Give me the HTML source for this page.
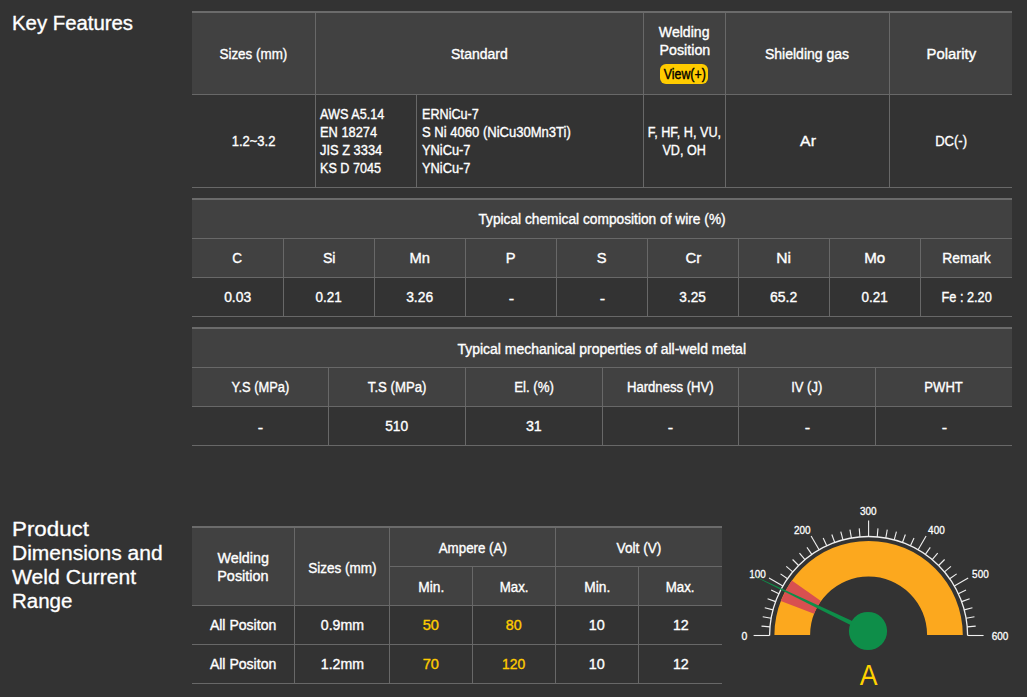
<!DOCTYPE html>
<html><head><meta charset="utf-8"><title>Key Features</title>
<style>
html,body{margin:0;padding:0;}
body{width:1027px;height:697px;background:#333333;position:relative;overflow:hidden;font-family:'Liberation Sans', sans-serif;}
.r{position:absolute;}
.t{position:absolute;white-space:nowrap;}
svg{position:absolute;left:0;top:0;}
</style></head><body>
<div class="r" style="left:192px;top:11px;width:820px;height:2px;background:#6b6b6b"></div><div class="r" style="left:192px;top:13px;width:820px;height:81px;background:#414141"></div><div class="r" style="left:192px;top:94px;width:820px;height:1px;background:#686868"></div><div class="r" style="left:192px;top:187px;width:820px;height:1px;background:#686868"></div><div class="r" style="left:315px;top:13px;width:1px;height:175px;background:#686868"></div><div class="r" style="left:643px;top:13px;width:1px;height:175px;background:#686868"></div><div class="r" style="left:725px;top:13px;width:1px;height:175px;background:#686868"></div><div class="r" style="left:889px;top:13px;width:1px;height:175px;background:#686868"></div><div class="r" style="left:416px;top:95px;width:1px;height:92px;background:#686868"></div><div class="r" style="left:660px;top:64px;width:48px;height:20px;background:#ffcc00;border-radius:6px"></div><div class="r" style="left:192px;top:198px;width:820px;height:2px;background:#6b6b6b"></div><div class="r" style="left:192px;top:200px;width:820px;height:77px;background:#414141"></div><div class="r" style="left:192px;top:238px;width:820px;height:1px;background:#686868"></div><div class="r" style="left:192px;top:277px;width:820px;height:1px;background:#686868"></div><div class="r" style="left:192px;top:316px;width:820px;height:1px;background:#686868"></div><div class="r" style="left:283px;top:239px;width:1px;height:78px;background:#686868"></div><div class="r" style="left:374px;top:239px;width:1px;height:78px;background:#686868"></div><div class="r" style="left:465px;top:239px;width:1px;height:78px;background:#686868"></div><div class="r" style="left:556px;top:239px;width:1px;height:78px;background:#686868"></div><div class="r" style="left:647px;top:239px;width:1px;height:78px;background:#686868"></div><div class="r" style="left:738px;top:239px;width:1px;height:78px;background:#686868"></div><div class="r" style="left:829px;top:239px;width:1px;height:78px;background:#686868"></div><div class="r" style="left:920px;top:239px;width:1px;height:78px;background:#686868"></div><div class="r" style="left:192px;top:327px;width:820px;height:2px;background:#6b6b6b"></div><div class="r" style="left:192px;top:329px;width:820px;height:77px;background:#414141"></div><div class="r" style="left:192px;top:367px;width:820px;height:1px;background:#686868"></div><div class="r" style="left:192px;top:406px;width:820px;height:1px;background:#686868"></div><div class="r" style="left:192px;top:445px;width:820px;height:1px;background:#686868"></div><div class="r" style="left:328px;top:368px;width:1px;height:78px;background:#686868"></div><div class="r" style="left:465px;top:368px;width:1px;height:78px;background:#686868"></div><div class="r" style="left:602px;top:368px;width:1px;height:78px;background:#686868"></div><div class="r" style="left:738px;top:368px;width:1px;height:78px;background:#686868"></div><div class="r" style="left:875px;top:368px;width:1px;height:78px;background:#686868"></div><div class="r" style="left:192px;top:526px;width:530px;height:2px;background:#6b6b6b"></div><div class="r" style="left:192px;top:528px;width:530px;height:77px;background:#414141"></div><div class="r" style="left:389px;top:566px;width:333px;height:1px;background:#686868"></div><div class="r" style="left:192px;top:605px;width:530px;height:1px;background:#686868"></div><div class="r" style="left:192px;top:644px;width:530px;height:1px;background:#686868"></div><div class="r" style="left:192px;top:683px;width:530px;height:1px;background:#686868"></div><div class="r" style="left:294px;top:528px;width:1px;height:156px;background:#686868"></div><div class="r" style="left:389px;top:528px;width:1px;height:156px;background:#686868"></div><div class="r" style="left:555px;top:528px;width:1px;height:156px;background:#686868"></div><div class="r" style="left:472px;top:567px;width:1px;height:117px;background:#686868"></div><div class="r" style="left:638px;top:567px;width:1px;height:117px;background:#686868"></div>
<div class="t" style="top:44px;font-size:14px;line-height:20px;color:#ffffff;-webkit-text-stroke:0.35px #ffffff;left:192px;width:123px;text-align:center;"><span style="display:inline-block;transform:scaleX(0.9579);transform-origin:50% 50%">Sizes (mm)</span></div><div class="t" style="top:44px;font-size:14px;line-height:20px;color:#ffffff;-webkit-text-stroke:0.35px #ffffff;left:316px;width:327px;text-align:center;"><span style="display:inline-block;transform:scaleX(0.9995);transform-origin:50% 50%">Standard</span></div><div class="t" style="top:22px;font-size:14px;line-height:20px;color:#ffffff;-webkit-text-stroke:0.35px #ffffff;left:644px;width:81px;text-align:center;"><span style="display:inline-block;transform:scaleX(1.0054);transform-origin:50% 50%">Welding</span></div><div class="t" style="top:40px;font-size:14px;line-height:20px;color:#ffffff;-webkit-text-stroke:0.35px #ffffff;left:644px;width:81px;text-align:center;"><span style="display:inline-block;transform:scaleX(1.0158);transform-origin:50% 50%">Position</span></div><div class="t" style="top:64px;font-size:14px;line-height:20px;color:#000000;-webkit-text-stroke:0.4px #000000;left:644px;width:81px;text-align:center;"><span style="display:inline-block;transform:scaleX(0.8825);transform-origin:50% 50%">View(+)</span></div><div class="t" style="top:44px;font-size:14px;line-height:20px;color:#ffffff;-webkit-text-stroke:0.35px #ffffff;left:726px;width:163px;text-align:center;"><span style="display:inline-block;transform:scaleX(1.0016);transform-origin:50% 50%">Shielding gas</span></div><div class="t" style="top:44px;font-size:14px;line-height:20px;color:#ffffff;-webkit-text-stroke:0.35px #ffffff;left:890px;width:122px;text-align:center;"><span style="display:inline-block;transform:scaleX(1.0602);transform-origin:50% 50%">Polarity</span></div><div class="t" style="top:131px;font-size:14px;line-height:20px;color:#ffffff;-webkit-text-stroke:0.35px #ffffff;left:192px;width:123px;text-align:center;"><span style="display:inline-block;transform:scaleX(0.9298);transform-origin:50% 50%">1.2~3.2</span></div><div class="t" style="top:104px;font-size:14px;line-height:20px;color:#ffffff;-webkit-text-stroke:0.35px #ffffff;left:320.3px;"><span style="display:inline-block;transform:scaleX(0.9046);transform-origin:0 50%">AWS A5.14</span></div><div class="t" style="top:122px;font-size:14px;line-height:20px;color:#ffffff;-webkit-text-stroke:0.35px #ffffff;left:320.3px;"><span style="display:inline-block;transform:scaleX(0.9168);transform-origin:0 50%">EN 18274</span></div><div class="t" style="top:140px;font-size:14px;line-height:20px;color:#ffffff;-webkit-text-stroke:0.35px #ffffff;left:320.3px;"><span style="display:inline-block;transform:scaleX(0.9187);transform-origin:0 50%">JIS Z 3334</span></div><div class="t" style="top:158px;font-size:14px;line-height:20px;color:#ffffff;-webkit-text-stroke:0.35px #ffffff;left:320.3px;"><span style="display:inline-block;transform:scaleX(0.9008);transform-origin:0 50%">KS D 7045</span></div><div class="t" style="top:104px;font-size:14px;line-height:20px;color:#ffffff;-webkit-text-stroke:0.35px #ffffff;left:422.3px;"><span style="display:inline-block;transform:scaleX(0.9014);transform-origin:0 50%">ERNiCu-7</span></div><div class="t" style="top:122px;font-size:14px;line-height:20px;color:#ffffff;-webkit-text-stroke:0.35px #ffffff;left:422.3px;"><span style="display:inline-block;transform:scaleX(0.9314);transform-origin:0 50%">S Ni 4060 (NiCu30Mn3Ti)</span></div><div class="t" style="top:140px;font-size:14px;line-height:20px;color:#ffffff;-webkit-text-stroke:0.35px #ffffff;left:422.3px;"><span style="display:inline-block;transform:scaleX(0.9167);transform-origin:0 50%">YNiCu-7</span></div><div class="t" style="top:158px;font-size:14px;line-height:20px;color:#ffffff;-webkit-text-stroke:0.35px #ffffff;left:422.3px;"><span style="display:inline-block;transform:scaleX(0.9167);transform-origin:0 50%">YNiCu-7</span></div><div class="t" style="top:122px;font-size:14px;line-height:20px;color:#ffffff;-webkit-text-stroke:0.35px #ffffff;left:644px;width:81px;text-align:center;"><span style="display:inline-block;transform:scaleX(0.9048);transform-origin:50% 50%">F, HF, H, VU,</span></div><div class="t" style="top:140px;font-size:14px;line-height:20px;color:#ffffff;-webkit-text-stroke:0.35px #ffffff;left:644px;width:81px;text-align:center;"><span style="display:inline-block;transform:scaleX(0.8998);transform-origin:50% 50%">VD, OH</span></div><div class="t" style="top:131px;font-size:14px;line-height:20px;color:#ffffff;-webkit-text-stroke:0.35px #ffffff;left:726px;width:163px;text-align:center;"><span style="display:inline-block;transform:scaleX(1.1286);transform-origin:50% 50%">Ar</span></div><div class="t" style="top:131px;font-size:14px;line-height:20px;color:#ffffff;-webkit-text-stroke:0.35px #ffffff;left:890px;width:122px;text-align:center;"><span style="display:inline-block;transform:scaleX(0.9293);transform-origin:50% 50%">DC(-)</span></div><div class="t" style="top:209px;font-size:14px;line-height:20px;color:#ffffff;-webkit-text-stroke:0.35px #ffffff;left:192px;width:820px;text-align:center;"><span style="display:inline-block;transform:scaleX(0.9810);transform-origin:50% 50%">Typical chemical composition of wire (%)</span></div><div class="t" style="top:248px;font-size:14px;line-height:20px;color:#ffffff;-webkit-text-stroke:0.35px #ffffff;left:192px;width:91px;text-align:center;"><span style="display:inline-block;transform:scaleX(0.9679);transform-origin:50% 50%">C</span></div><div class="t" style="top:287px;font-size:14px;line-height:20px;color:#ffffff;-webkit-text-stroke:0.35px #ffffff;left:192px;width:91px;text-align:center;"><span style="display:inline-block;transform:scaleX(0.9908);transform-origin:50% 50%">0.03</span></div><div class="t" style="top:248px;font-size:14px;line-height:20px;color:#ffffff;-webkit-text-stroke:0.35px #ffffff;left:284px;width:90px;text-align:center;"><span style="display:inline-block;transform:scaleX(1.0118);transform-origin:50% 50%">Si</span></div><div class="t" style="top:287px;font-size:14px;line-height:20px;color:#ffffff;-webkit-text-stroke:0.35px #ffffff;left:284px;width:90px;text-align:center;"><span style="display:inline-block;transform:scaleX(0.9615);transform-origin:50% 50%">0.21</span></div><div class="t" style="top:248px;font-size:14px;line-height:20px;color:#ffffff;-webkit-text-stroke:0.35px #ffffff;left:375px;width:90px;text-align:center;"><span style="display:inline-block;transform:scaleX(1.0538);transform-origin:50% 50%">Mn</span></div><div class="t" style="top:287px;font-size:14px;line-height:20px;color:#ffffff;-webkit-text-stroke:0.35px #ffffff;left:375px;width:90px;text-align:center;"><span style="display:inline-block;transform:scaleX(0.9872);transform-origin:50% 50%">3.26</span></div><div class="t" style="top:248px;font-size:14px;line-height:20px;color:#ffffff;-webkit-text-stroke:0.35px #ffffff;left:466px;width:90px;text-align:center;"><span style="display:inline-block;transform:scaleX(1.0488);transform-origin:50% 50%">P</span></div><div class="t" style="top:289px;font-size:14px;line-height:20px;color:#ffffff;-webkit-text-stroke:0.35px #ffffff;left:466px;width:90px;text-align:center;"><span style="display:inline-block;transform:scaleX(1.1500);transform-origin:50% 50%">-</span></div><div class="t" style="top:248px;font-size:14px;line-height:20px;color:#ffffff;-webkit-text-stroke:0.35px #ffffff;left:557px;width:90px;text-align:center;"><span style="display:inline-block;transform:scaleX(1.0488);transform-origin:50% 50%">S</span></div><div class="t" style="top:289px;font-size:14px;line-height:20px;color:#ffffff;-webkit-text-stroke:0.35px #ffffff;left:557px;width:90px;text-align:center;"><span style="display:inline-block;transform:scaleX(1.1500);transform-origin:50% 50%">-</span></div><div class="t" style="top:248px;font-size:14px;line-height:20px;color:#ffffff;-webkit-text-stroke:0.35px #ffffff;left:648px;width:90px;text-align:center;"><span style="display:inline-block;transform:scaleX(1.0689);transform-origin:50% 50%">Cr</span></div><div class="t" style="top:287px;font-size:14px;line-height:20px;color:#ffffff;-webkit-text-stroke:0.35px #ffffff;left:648px;width:90px;text-align:center;"><span style="display:inline-block;transform:scaleX(0.9725);transform-origin:50% 50%">3.25</span></div><div class="t" style="top:248px;font-size:14px;line-height:20px;color:#ffffff;-webkit-text-stroke:0.35px #ffffff;left:739px;width:90px;text-align:center;"><span style="display:inline-block;transform:scaleX(1.1183);transform-origin:50% 50%">Ni</span></div><div class="t" style="top:287px;font-size:14px;line-height:20px;color:#ffffff;-webkit-text-stroke:0.35px #ffffff;left:739px;width:90px;text-align:center;"><span style="display:inline-block;transform:scaleX(0.9982);transform-origin:50% 50%">65.2</span></div><div class="t" style="top:248px;font-size:14px;line-height:20px;color:#ffffff;-webkit-text-stroke:0.35px #ffffff;left:830px;width:90px;text-align:center;"><span style="display:inline-block;transform:scaleX(1.0795);transform-origin:50% 50%">Mo</span></div><div class="t" style="top:287px;font-size:14px;line-height:20px;color:#ffffff;-webkit-text-stroke:0.35px #ffffff;left:830px;width:90px;text-align:center;"><span style="display:inline-block;transform:scaleX(0.9615);transform-origin:50% 50%">0.21</span></div><div class="t" style="top:248px;font-size:14px;line-height:20px;color:#ffffff;-webkit-text-stroke:0.35px #ffffff;left:921px;width:91px;text-align:center;"><span style="display:inline-block;transform:scaleX(0.9874);transform-origin:50% 50%">Remark</span></div><div class="t" style="top:287px;font-size:14px;line-height:20px;color:#ffffff;-webkit-text-stroke:0.35px #ffffff;left:921px;width:91px;text-align:center;"><span style="display:inline-block;transform:scaleX(0.9101);transform-origin:50% 50%">Fe : 2.20</span></div><div class="t" style="top:339px;font-size:14px;line-height:20px;color:#ffffff;-webkit-text-stroke:0.35px #ffffff;left:192px;width:820px;text-align:center;"><span style="display:inline-block;transform:scaleX(0.9967);transform-origin:50% 50%">Typical mechanical properties of all-weld metal</span></div><div class="t" style="top:377px;font-size:14px;line-height:20px;color:#ffffff;-webkit-text-stroke:0.35px #ffffff;left:192px;width:136px;text-align:center;"><span style="display:inline-block;transform:scaleX(0.9177);transform-origin:50% 50%">Y.S (MPa)</span></div><div class="t" style="top:418px;font-size:14px;line-height:20px;color:#ffffff;-webkit-text-stroke:0.35px #ffffff;left:192px;width:136px;text-align:center;"><span style="display:inline-block;transform:scaleX(1.1500);transform-origin:50% 50%">-</span></div><div class="t" style="top:377px;font-size:14px;line-height:20px;color:#ffffff;-webkit-text-stroke:0.35px #ffffff;left:329px;width:136px;text-align:center;"><span style="display:inline-block;transform:scaleX(0.9400);transform-origin:50% 50%">T.S (MPa)</span></div><div class="t" style="top:416px;font-size:14px;line-height:20px;color:#ffffff;-webkit-text-stroke:0.35px #ffffff;left:329px;width:136px;text-align:center;"><span style="display:inline-block;transform:scaleX(0.9846);transform-origin:50% 50%">510</span></div><div class="t" style="top:377px;font-size:14px;line-height:20px;color:#ffffff;-webkit-text-stroke:0.35px #ffffff;left:466px;width:136px;text-align:center;"><span style="display:inline-block;transform:scaleX(0.9452);transform-origin:50% 50%">El. (%)</span></div><div class="t" style="top:416px;font-size:14px;line-height:20px;color:#ffffff;-webkit-text-stroke:0.35px #ffffff;left:466px;width:136px;text-align:center;"><span style="display:inline-block;transform:scaleX(1.0142);transform-origin:50% 50%">31</span></div><div class="t" style="top:377px;font-size:14px;line-height:20px;color:#ffffff;-webkit-text-stroke:0.35px #ffffff;left:603px;width:135px;text-align:center;"><span style="display:inline-block;transform:scaleX(0.9374);transform-origin:50% 50%">Hardness (HV)</span></div><div class="t" style="top:418px;font-size:14px;line-height:20px;color:#ffffff;-webkit-text-stroke:0.35px #ffffff;left:603px;width:135px;text-align:center;"><span style="display:inline-block;transform:scaleX(1.1500);transform-origin:50% 50%">-</span></div><div class="t" style="top:377px;font-size:14px;line-height:20px;color:#ffffff;-webkit-text-stroke:0.35px #ffffff;left:739px;width:136px;text-align:center;"><span style="display:inline-block;transform:scaleX(0.9267);transform-origin:50% 50%">IV (J)</span></div><div class="t" style="top:418px;font-size:14px;line-height:20px;color:#ffffff;-webkit-text-stroke:0.35px #ffffff;left:739px;width:136px;text-align:center;"><span style="display:inline-block;transform:scaleX(1.1500);transform-origin:50% 50%">-</span></div><div class="t" style="top:377px;font-size:14px;line-height:20px;color:#ffffff;-webkit-text-stroke:0.35px #ffffff;left:876px;width:136px;text-align:center;"><span style="display:inline-block;transform:scaleX(0.9340);transform-origin:50% 50%">PWHT</span></div><div class="t" style="top:418px;font-size:14px;line-height:20px;color:#ffffff;-webkit-text-stroke:0.35px #ffffff;left:876px;width:136px;text-align:center;"><span style="display:inline-block;transform:scaleX(1.1500);transform-origin:50% 50%">-</span></div><div class="t" style="top:548px;font-size:14px;line-height:20px;color:#ffffff;-webkit-text-stroke:0.35px #ffffff;left:192px;width:102px;text-align:center;"><span style="display:inline-block;transform:scaleX(1.0193);transform-origin:50% 50%">Welding</span></div><div class="t" style="top:566px;font-size:14px;line-height:20px;color:#ffffff;-webkit-text-stroke:0.35px #ffffff;left:192px;width:102px;text-align:center;"><span style="display:inline-block;transform:scaleX(1.0299);transform-origin:50% 50%">Position</span></div><div class="t" style="top:558px;font-size:14px;line-height:20px;color:#ffffff;-webkit-text-stroke:0.35px #ffffff;left:295px;width:94px;text-align:center;"><span style="display:inline-block;transform:scaleX(0.9664);transform-origin:50% 50%">Sizes (mm)</span></div><div class="t" style="top:538px;font-size:14px;line-height:20px;color:#ffffff;-webkit-text-stroke:0.35px #ffffff;left:390px;width:165px;text-align:center;"><span style="display:inline-block;transform:scaleX(0.9514);transform-origin:50% 50%">Ampere (A)</span></div><div class="t" style="top:538px;font-size:14px;line-height:20px;color:#ffffff;-webkit-text-stroke:0.35px #ffffff;left:556px;width:166px;text-align:center;"><span style="display:inline-block;transform:scaleX(0.9737);transform-origin:50% 50%">Volt (V)</span></div><div class="t" style="top:577px;font-size:14px;line-height:20px;color:#ffffff;-webkit-text-stroke:0.35px #ffffff;left:390px;width:82px;text-align:center;"><span style="display:inline-block;transform:scaleX(0.9829);transform-origin:50% 50%">Min.</span></div><div class="t" style="top:577px;font-size:14px;line-height:20px;color:#ffffff;-webkit-text-stroke:0.35px #ffffff;left:473px;width:82px;text-align:center;"><span style="display:inline-block;transform:scaleX(0.9491);transform-origin:50% 50%">Max.</span></div><div class="t" style="top:577px;font-size:14px;line-height:20px;color:#ffffff;-webkit-text-stroke:0.35px #ffffff;left:556px;width:82px;text-align:center;"><span style="display:inline-block;transform:scaleX(0.9829);transform-origin:50% 50%">Min.</span></div><div class="t" style="top:577px;font-size:14px;line-height:20px;color:#ffffff;-webkit-text-stroke:0.35px #ffffff;left:639px;width:83px;text-align:center;"><span style="display:inline-block;transform:scaleX(0.9491);transform-origin:50% 50%">Max.</span></div><div class="t" style="top:615px;font-size:14px;line-height:20px;color:#ffffff;-webkit-text-stroke:0.35px #ffffff;left:192px;width:102px;text-align:center;"><span style="display:inline-block;transform:scaleX(1.0037);transform-origin:50% 50%">All Positon</span></div><div class="t" style="top:615px;font-size:14px;line-height:20px;color:#ffffff;-webkit-text-stroke:0.35px #ffffff;left:295px;width:94px;text-align:center;"><span style="display:inline-block;transform:scaleX(1.0094);transform-origin:50% 50%">0.9mm</span></div><div class="t" style="top:615px;font-size:14px;line-height:20px;color:#ffcc00;-webkit-text-stroke:0.35px #ffcc00;left:390px;width:82px;text-align:center;"><span style="display:inline-block;transform:scaleX(1.0463);transform-origin:50% 50%">50</span></div><div class="t" style="top:615px;font-size:14px;line-height:20px;color:#ffcc00;-webkit-text-stroke:0.35px #ffcc00;left:473px;width:82px;text-align:center;"><span style="display:inline-block;transform:scaleX(1.0207);transform-origin:50% 50%">80</span></div><div class="t" style="top:615px;font-size:14px;line-height:20px;color:#ffffff;-webkit-text-stroke:0.35px #ffffff;left:556px;width:82px;text-align:center;"><span style="display:inline-block;transform:scaleX(1.0271);transform-origin:50% 50%">10</span></div><div class="t" style="top:615px;font-size:14px;line-height:20px;color:#ffffff;-webkit-text-stroke:0.35px #ffffff;left:639px;width:83px;text-align:center;"><span style="display:inline-block;transform:scaleX(1.0142);transform-origin:50% 50%">12</span></div><div class="t" style="top:654px;font-size:14px;line-height:20px;color:#ffffff;-webkit-text-stroke:0.35px #ffffff;left:192px;width:102px;text-align:center;"><span style="display:inline-block;transform:scaleX(1.0037);transform-origin:50% 50%">All Positon</span></div><div class="t" style="top:654px;font-size:14px;line-height:20px;color:#ffffff;-webkit-text-stroke:0.35px #ffffff;left:295px;width:94px;text-align:center;"><span style="display:inline-block;transform:scaleX(1.0094);transform-origin:50% 50%">1.2mm</span></div><div class="t" style="top:654px;font-size:14px;line-height:20px;color:#ffcc00;-webkit-text-stroke:0.35px #ffcc00;left:390px;width:82px;text-align:center;"><span style="display:inline-block;transform:scaleX(1.0463);transform-origin:50% 50%">70</span></div><div class="t" style="top:654px;font-size:14px;line-height:20px;color:#ffcc00;-webkit-text-stroke:0.35px #ffcc00;left:473px;width:82px;text-align:center;"><span style="display:inline-block;transform:scaleX(0.9932);transform-origin:50% 50%">120</span></div><div class="t" style="top:654px;font-size:14px;line-height:20px;color:#ffffff;-webkit-text-stroke:0.35px #ffffff;left:556px;width:82px;text-align:center;"><span style="display:inline-block;transform:scaleX(1.0271);transform-origin:50% 50%">10</span></div><div class="t" style="top:654px;font-size:14px;line-height:20px;color:#ffffff;-webkit-text-stroke:0.35px #ffffff;left:639px;width:83px;text-align:center;"><span style="display:inline-block;transform:scaleX(1.0142);transform-origin:50% 50%">12</span></div><div class="t" style="top:10px;font-size:20px;line-height:26px;color:#ffffff;-webkit-text-stroke:0.35px #ffffff;left:11.7px;"><span style="display:inline-block;transform:scaleX(1.0172);transform-origin:0 50%">Key Features</span></div><div class="t" style="top:516px;font-size:20px;line-height:26px;color:#ffffff;-webkit-text-stroke:0.3px #ffffff;left:11.8px;"><span style="display:inline-block;transform:scaleX(1.1155);transform-origin:0 50%">Product</span></div><div class="t" style="top:540px;font-size:20px;line-height:26px;color:#ffffff;-webkit-text-stroke:0.3px #ffffff;left:11.8px;"><span style="display:inline-block;transform:scaleX(1.0500);transform-origin:0 50%">Dimensions and</span></div><div class="t" style="top:564px;font-size:20px;line-height:26px;color:#ffffff;-webkit-text-stroke:0.3px #ffffff;left:11.8px;"><span style="display:inline-block;transform:scaleX(1.0566);transform-origin:0 50%">Weld Current</span></div><div class="t" style="top:588px;font-size:20px;line-height:26px;color:#ffffff;-webkit-text-stroke:0.3px #ffffff;left:11.8px;"><span style="display:inline-block;transform:scaleX(1.0248);transform-origin:0 50%">Range</span></div>
<svg width="1027" height="697" viewBox="0 0 1027 697"><path d="M774.40,635.00 A94.2,94.2 0 0 1 962.80,635.00 L927.10,635.00 A58.5,58.5 0 0 0 810.10,635.00 Z" fill="#fca81e"/><path d="M780.78,600.93 A94.2,94.2 0 0 1 791.81,580.43 L820.92,601.11 A58.5,58.5 0 0 0 814.06,613.84 Z" fill="#d85050"/><path d="M769.60,635.50 A99,99 0 0 1 967.60,635.50" fill="none" stroke="#f0f0f0" stroke-width="1.3"/><line x1="769.60" y1="635.50" x2="753.60" y2="635.50" stroke="#f0f0f0" stroke-width="1.1"/><line x1="769.98" y1="626.87" x2="761.51" y2="626.13" stroke="#f0f0f0" stroke-width="1.1"/><line x1="771.10" y1="618.31" x2="762.73" y2="616.83" stroke="#f0f0f0" stroke-width="1.1"/><line x1="772.97" y1="609.88" x2="764.76" y2="607.68" stroke="#f0f0f0" stroke-width="1.1"/><line x1="775.57" y1="601.64" x2="767.58" y2="598.73" stroke="#f0f0f0" stroke-width="1.1"/><line x1="778.88" y1="593.66" x2="771.17" y2="590.07" stroke="#f0f0f0" stroke-width="1.1"/><line x1="782.86" y1="586.00" x2="769.01" y2="578.00" stroke="#f0f0f0" stroke-width="1.1"/><line x1="787.50" y1="578.72" x2="780.54" y2="573.84" stroke="#f0f0f0" stroke-width="1.1"/><line x1="792.76" y1="571.86" x2="786.25" y2="566.40" stroke="#f0f0f0" stroke-width="1.1"/><line x1="798.60" y1="565.50" x2="792.59" y2="559.49" stroke="#f0f0f0" stroke-width="1.1"/><line x1="804.96" y1="559.66" x2="799.50" y2="553.15" stroke="#f0f0f0" stroke-width="1.1"/><line x1="811.82" y1="554.40" x2="806.94" y2="547.44" stroke="#f0f0f0" stroke-width="1.1"/><line x1="819.10" y1="549.76" x2="811.10" y2="535.91" stroke="#f0f0f0" stroke-width="1.1"/><line x1="826.76" y1="545.78" x2="823.17" y2="538.07" stroke="#f0f0f0" stroke-width="1.1"/><line x1="834.74" y1="542.47" x2="831.83" y2="534.48" stroke="#f0f0f0" stroke-width="1.1"/><line x1="842.98" y1="539.87" x2="840.78" y2="531.66" stroke="#f0f0f0" stroke-width="1.1"/><line x1="851.41" y1="538.00" x2="849.93" y2="529.63" stroke="#f0f0f0" stroke-width="1.1"/><line x1="859.97" y1="536.88" x2="859.23" y2="528.41" stroke="#f0f0f0" stroke-width="1.1"/><line x1="868.60" y1="536.50" x2="868.60" y2="520.50" stroke="#f0f0f0" stroke-width="1.1"/><line x1="877.23" y1="536.88" x2="877.97" y2="528.41" stroke="#f0f0f0" stroke-width="1.1"/><line x1="885.79" y1="538.00" x2="887.27" y2="529.63" stroke="#f0f0f0" stroke-width="1.1"/><line x1="894.22" y1="539.87" x2="896.42" y2="531.66" stroke="#f0f0f0" stroke-width="1.1"/><line x1="902.46" y1="542.47" x2="905.37" y2="534.48" stroke="#f0f0f0" stroke-width="1.1"/><line x1="910.44" y1="545.78" x2="914.03" y2="538.07" stroke="#f0f0f0" stroke-width="1.1"/><line x1="918.10" y1="549.76" x2="926.10" y2="535.91" stroke="#f0f0f0" stroke-width="1.1"/><line x1="925.38" y1="554.40" x2="930.26" y2="547.44" stroke="#f0f0f0" stroke-width="1.1"/><line x1="932.24" y1="559.66" x2="937.70" y2="553.15" stroke="#f0f0f0" stroke-width="1.1"/><line x1="938.60" y1="565.50" x2="944.61" y2="559.49" stroke="#f0f0f0" stroke-width="1.1"/><line x1="944.44" y1="571.86" x2="950.95" y2="566.40" stroke="#f0f0f0" stroke-width="1.1"/><line x1="949.70" y1="578.72" x2="956.66" y2="573.84" stroke="#f0f0f0" stroke-width="1.1"/><line x1="954.34" y1="586.00" x2="968.19" y2="578.00" stroke="#f0f0f0" stroke-width="1.1"/><line x1="958.32" y1="593.66" x2="966.03" y2="590.07" stroke="#f0f0f0" stroke-width="1.1"/><line x1="961.63" y1="601.64" x2="969.62" y2="598.73" stroke="#f0f0f0" stroke-width="1.1"/><line x1="964.23" y1="609.88" x2="972.44" y2="607.68" stroke="#f0f0f0" stroke-width="1.1"/><line x1="966.10" y1="618.31" x2="974.47" y2="616.83" stroke="#f0f0f0" stroke-width="1.1"/><line x1="967.22" y1="626.87" x2="975.69" y2="626.13" stroke="#f0f0f0" stroke-width="1.1"/><line x1="967.60" y1="635.50" x2="983.60" y2="635.50" stroke="#f0f0f0" stroke-width="1.1"/><text x="741.60" y="640" textLength="5.8" lengthAdjust="spacingAndGlyphs" font-family="Liberation Sans" font-size="11" fill="#ffffff" stroke="#ffffff" stroke-width="0.3">0</text><text x="749.30" y="578" textLength="16.6" lengthAdjust="spacingAndGlyphs" font-family="Liberation Sans" font-size="11" fill="#ffffff" stroke="#ffffff" stroke-width="0.3">100</text><text x="794.00" y="533.5" textLength="16.6" lengthAdjust="spacingAndGlyphs" font-family="Liberation Sans" font-size="11" fill="#ffffff" stroke="#ffffff" stroke-width="0.3">200</text><text x="860.00" y="515.2" textLength="16.6" lengthAdjust="spacingAndGlyphs" font-family="Liberation Sans" font-size="11" fill="#ffffff" stroke="#ffffff" stroke-width="0.3">300</text><text x="928.10" y="533.5" textLength="16.6" lengthAdjust="spacingAndGlyphs" font-family="Liberation Sans" font-size="11" fill="#ffffff" stroke="#ffffff" stroke-width="0.3">400</text><text x="972.10" y="578" textLength="16.6" lengthAdjust="spacingAndGlyphs" font-family="Liberation Sans" font-size="11" fill="#ffffff" stroke="#ffffff" stroke-width="0.3">500</text><text x="991.70" y="640" textLength="16.6" lengthAdjust="spacingAndGlyphs" font-family="Liberation Sans" font-size="11" fill="#ffffff" stroke="#ffffff" stroke-width="0.3">600</text><path d="M869.13,628.66 L747.60,572.90 L866.87,633.34 Z" fill="#0e8e49"/><circle cx="868.0" cy="631.0" r="19.1" fill="#0e8e49"/></svg>
<div class="t" style="left:829px;width:80px;text-align:center;top:658px;font-size:29px;line-height:34px;color:#ffd200;"><span style="display:inline-block;transform:scaleX(0.92)">A</span></div>
</body></html>
